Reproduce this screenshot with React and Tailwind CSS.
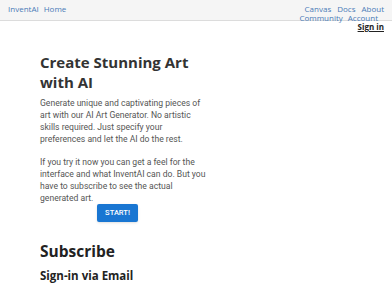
import React from 'react';

const App = () => {
    return (
        <div className="min-h-[294px] bg-white font-['Open_Sans',sans-serif]">
            {/* Header */}
            <div className="relative h-[21px] bg-[#f5f5f5] border-b border-[#dcdcdc] flex justify-between items-start">
                <div className="flex gap-[5px] pl-[8px] pt-[4px] text-[8px] leading-[10px] text-[#4a7bb7]">
                    <span>InventAI</span>
                    <span>Home</span>
                </div>
                <div className="w-[94px] mr-[8px] pt-[4px] flex flex-wrap justify-end text-[8px] leading-[9px] text-[#4a7bb7]">
                    <span className="ml-[6px]">Canvas</span>
                    <span className="ml-[6px]">Docs</span>
                    <span className="ml-[6px]">About</span>
                    <span className="ml-[6px]">Community</span>
                    <span className="ml-[5px] mr-[6px]">Account</span>
                    <span className="font-bold text-[#222] underline">Sign in</span>
                </div>
            </div>

            {/* Hero */}
            <div className="w-[167px] ml-[40px] mt-[31px]">
                <h1 className="w-[156px] text-[15px] leading-[20px] font-bold text-[#333]">Create Stunning Art with AI</h1>
                <p className="mt-[5px] text-[8.6px] leading-[12px] text-[#555] font-['Roboto',sans-serif]">
                    Generate unique and captivating pieces of art with our AI Art Generator. No artistic skills required. Just specify your preferences and let the AI do the rest.
                </p>
                <p className="mt-[11px] text-[8.6px] leading-[12px] text-[#555] font-['Roboto',sans-serif]">
                    If you try it now you can get a feel for the interface and what InventAI can do. But you have to subscribe to see the actual generated art.
                </p>
                <div className="w-[155px] flex justify-center">
                    <button className="h-[18px] px-[8px] rounded-[2px] bg-[#1976d2] text-white text-[7.5px] font-medium font-['Roboto',sans-serif] shadow-sm">
                        START!
                    </button>
                </div>
                <h2 className="mt-[18px] text-[15.5px] leading-[22px] font-bold text-[#222]">Subscribe</h2>
                <h3 className="mt-[5px] text-[11.5px] leading-[18px] font-bold text-[#222]">Sign-in via Email</h3>
            </div>
        </div>
    );
};

export default App;
